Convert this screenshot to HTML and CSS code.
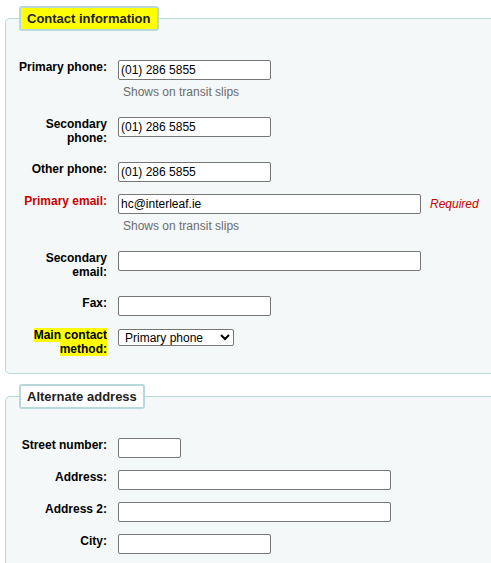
FILE: index.html
```html
<!DOCTYPE html>
<html>
  <head>
    <meta charset="UTF-8">
    <title>Edit patron</title>
    <link rel="stylesheet" href="styles.css">
  </head>
  <body>
    <div class="page">
      <fieldset class="rows">
        <legend class="term">Contact information</legend>
        <ol>
          <li>
            <label for="phone">Primary phone:</label>
            <div class="field">
              <input type="text" id="phone" class="phone" value="(01) 286 5855">
              <div class="hint">Shows on transit slips</div>
            </div>
          </li>
          <li>
            <label for="phonepro">Secondary phone:</label>
            <div class="field">
              <input type="text" id="phonepro" class="phone" value="(01) 286 5855">
            </div>
          </li>
          <li>
            <label for="mobile">Other phone:</label>
            <div class="field">
              <input type="text" id="mobile" class="phone" value="(01) 286 5855">
            </div>
          </li>
          <li>
            <label for="email" class="required">Primary email:</label>
            <div class="field">
              <div class="inline">
                <input type="text" id="email" class="email" value="hc@interleaf.ie">
                <span class="required-note">Required</span>
              </div>
              <div class="hint">Shows on transit slips</div>
            </div>
          </li>
          <li>
            <label for="emailpro">Secondary email:</label>
            <div class="field">
              <input type="text" id="emailpro" class="email" value="">
            </div>
          </li>
          <li>
            <label for="fax">Fax:</label>
            <div class="field">
              <input type="text" id="fax" class="phone" value="">
            </div>
          </li>
          <li>
            <label for="primary_contact_method"><span class="term">Main contact method:</span></label>
            <div class="field">
              <select id="primary_contact_method">
                <option>Primary phone</option>
                <option>Secondary phone</option>
                <option>Other phone</option>
                <option>Primary email</option>
                <option>Secondary email</option>
                <option>Fax</option>
              </select>
            </div>
          </li>
        </ol>
      </fieldset>

      <fieldset class="rows">
        <legend>Alternate address</legend>
        <ol>
          <li>
            <label for="B_streetnumber">Street number:</label>
            <div class="field">
              <input type="text" id="B_streetnumber" class="short" value="">
            </div>
          </li>
          <li>
            <label for="B_address">Address:</label>
            <div class="field">
              <input type="text" id="B_address" class="address" value="">
            </div>
          </li>
          <li>
            <label for="B_address2">Address 2:</label>
            <div class="field">
              <input type="text" id="B_address2" class="address" value="">
            </div>
          </li>
          <li>
            <label for="B_city">City:</label>
            <div class="field">
              <input type="text" id="B_city" class="phone" value="">
            </div>
          </li>
        </ol>
      </fieldset>
    </div>
  </body>
</html>
```

FILE: styles.css
```css
html,
body {
  margin: 0;
  overflow: hidden;
  background-color: #fff;
}

body {
  font-family: "Liberation Sans", Arial, sans-serif;
  font-size: 12px;
  color: #000;
}

.page {
  padding-left: 5px;
  width: 640px;
}

fieldset.rows {
  margin: 6px 0 0 0;
  padding: 0 9px;
  background-color: #f4f8f9;
  border: 1px solid #b9d8d9;
  border-radius: 5px;
}

fieldset.rows + fieldset.rows {
  margin-top: 10px;
}

fieldset.rows legend {
  margin-left: 4px;
  padding: 3px 6px;
  font-size: 13px;
  font-weight: bold;
  line-height: 15px;
  color: #222;
  background-color: #fff;
  border: 2px solid #b9d8d9;
  border-radius: 3px;
}

.term {
  background-color: #ffff00;
}

fieldset.rows legend.term {
  background-color: #ffff00;
}

fieldset.rows ol {
  list-style: none;
  margin: 0;
  padding: 29px 0 0 0;
}

fieldset.rows li {
  display: flex;
  align-items: flex-start;
  padding-bottom: 12px;
}

fieldset.rows label {
  box-sizing: border-box;
  flex: none;
  width: 92px;
  margin-right: 11px;
  padding-bottom: 5px;
  font-weight: bold;
  line-height: 14px;
  text-align: right;
}

fieldset.rows label.required {
  color: #cc0000;
}

.field {
  display: flex;
  flex-direction: column;
  align-items: flex-start;
}

.inline {
  display: flex;
  align-items: center;
}

input[type="text"] {
  box-sizing: border-box;
  height: 20px;
  margin: 0;
  padding: 0 2px;
  font-family: "Liberation Sans", Arial, sans-serif;
  font-size: 12px;
  color: #000;
  background-color: #fff;
  border: 1px solid #767676;
  border-radius: 2px;
}

input.phone {
  width: 153px;
}

input.email {
  width: 303px;
}

input.address {
  width: 273px;
}

input.short {
  width: 63px;
}

select {
  box-sizing: border-box;
  width: 116px;
  height: 17px;
  margin: 1px 0 0 0;
  padding: 0 0 0 2px;
  font-family: "Liberation Sans", Arial, sans-serif;
  font-size: 12px;
  color: #000;
  background-color: #fff;
  border: 1px solid #767676;
  border-radius: 2px;
}

.hint {
  margin: 5px 0 6px 5px;
  line-height: 14px;
  color: #6c6c6c;
}

.required-note {
  margin-left: 9px;
  font-style: italic;
  color: #cc0000;
}
```
